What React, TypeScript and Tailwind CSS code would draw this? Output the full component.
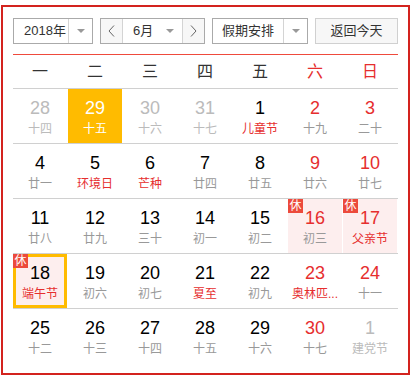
import React from "react";

type Cell = {
  d: string;
  l: string;
  out?: boolean;
  sel?: boolean;
  today?: boolean;
  rest?: boolean;
  red?: boolean;
  fest?: boolean;
};

const rows: Cell[][] = [
  [
    { d: "28", l: "十四", out: true },
    { d: "29", l: "十五", sel: true },
    { d: "30", l: "十六", out: true },
    { d: "31", l: "十七", out: true },
    { d: "1", l: "儿童节", fest: true },
    { d: "2", l: "十九", red: true },
    { d: "3", l: "二十", red: true },
  ],
  [
    { d: "4", l: "廿一" },
    { d: "5", l: "环境日", fest: true },
    { d: "6", l: "芒种", fest: true },
    { d: "7", l: "廿四" },
    { d: "8", l: "廿五" },
    { d: "9", l: "廿六", red: true },
    { d: "10", l: "廿七", red: true },
  ],
  [
    { d: "11", l: "廿八" },
    { d: "12", l: "廿九" },
    { d: "13", l: "三十" },
    { d: "14", l: "初一" },
    { d: "15", l: "初二" },
    { d: "16", l: "初三", red: true, rest: true },
    { d: "17", l: "父亲节", red: true, rest: true, fest: true },
  ],
  [
    { d: "18", l: "端午节", rest: true, today: true, fest: true },
    { d: "19", l: "初六" },
    { d: "20", l: "初七" },
    { d: "21", l: "夏至", fest: true },
    { d: "22", l: "初九" },
    { d: "23", l: "奥林匹...", red: true, fest: true },
    { d: "24", l: "十一", red: true },
  ],
  [
    { d: "25", l: "十二" },
    { d: "26", l: "十三" },
    { d: "27", l: "十四" },
    { d: "28", l: "十五" },
    { d: "29", l: "十六" },
    { d: "30", l: "十七", red: true },
    { d: "1", l: "建党节", out: true },
  ],
];

const FONT = { fontFamily: '"Liberation Sans", Arial, "Noto Sans CJK SC", sans-serif' };

function Tri() {
  return (
    <svg width="8" height="4" viewBox="0 0 8 4">
      <path d="M0 0H8L4 4Z" fill="#999" />
    </svg>
  );
}

function Chevron({ dir }: { dir: "l" | "r" }) {
  return (
    <svg width="7" height="12" viewBox="0 0 7 12">
      <polyline
        points={dir === "l" ? "6,0.5 1,6 6,11.5" : "1,0.5 6,6 1,11.5"}
        fill="none"
        stroke="#666"
        strokeWidth="1"
      />
    </svg>
  );
}

function DayCell({ c }: { c: Cell }) {
  let numColor = "text-black";
  let lunColor = "text-[#999]";
  if (c.red) numColor = "text-[#e62e2e]";
  if (c.fest) lunColor = "text-[#e62e2e]";
  if (c.out) {
    numColor = "text-[#bbb]";
    lunColor = "text-[#bbb]";
  }
  if (c.sel) {
    numColor = "text-white";
    lunColor = "text-white";
  }
  const bg = c.sel ? "bg-[#ffbb00]" : c.rest ? "bg-[#fdeeee]" : "";
  return (
    <div className="w-[55px] h-[54px] pr-px">
      <div className={`relative w-[54px] h-[54px] pt-[8px] flex flex-col items-center ${bg}`}>
        {c.today && <div className="absolute inset-0 border-[3px] border-[#ffbb00]" />}
        {c.rest && (
          <div className="absolute left-0 top-0 w-[15px] h-[14px] bg-[#ec4a3c] text-white text-[12px] leading-[14px] text-center">
            休
          </div>
        )}
        <div className={`relative h-[22px] leading-[22px] text-[18px] ${numColor}`}>{c.d}</div>
        <div className={`relative h-[20px] leading-[20px] text-[12px] whitespace-nowrap ${lunColor}`}>{c.l}</div>
      </div>
    </div>
  );
}

export default function App() {
  const week = ["一", "二", "三", "四", "五", "六", "日"];
  return (
    <div style={FONT} className="bg-white w-[411px] h-[376px] pt-[5px] pl-px">
      <div className="w-[409px] h-[370px] border-2 border-[#d3231e] px-[10px] pt-[11px] pb-[10px]">
        <div className="flex h-[26px] text-[13px] text-[#333]">
          <div className="flex w-[80px] border border-[#aaa]">
            <div className="flex-1 flex items-center pl-[10px]">2018年</div>
            <div className="w-[24px] border-l border-[#d4d4d4] flex items-center justify-center">
              <Tri />
            </div>
          </div>
          <div className="ml-[7px] flex w-[105px] border border-[#aaa]">
            <div className="w-[22px] border-r border-[#d4d4d4] bg-[#f7f7f7] flex items-center justify-center">
              <Chevron dir="l" />
            </div>
            <div className="flex-1 flex items-center pl-[10px] pr-[8px] justify-between">
              <span>6月</span>
              <Tri />
            </div>
            <div className="w-[22px] border-l border-[#d4d4d4] bg-[#f7f7f7] flex items-center justify-center">
              <Chevron dir="r" />
            </div>
          </div>
          <div className="ml-[7px] flex w-[96px] border border-[#aaa]">
            <div className="flex-1 flex items-center justify-center">假期安排</div>
            <div className="w-[24px] border-l border-[#d4d4d4] flex items-center justify-center">
              <Tri />
            </div>
          </div>
          <div className="ml-auto w-[83px] border border-[#d0d0d0] bg-[#f7f7f7] flex items-center justify-center">
            返回今天
          </div>
        </div>
        <div className="mt-[10px] h-px bg-[#ef4a3c]" />
        <div className="grid grid-cols-7 h-[34px] border-b border-[#d0d0d0]">
          {week.map((w, i) => (
            <div
              key={w}
              className={`w-[54px] flex items-center justify-center text-[16px] ${i >= 5 ? "text-[#e62e2e]" : "text-[#333]"}`}
            >
              {w}
            </div>
          ))}
        </div>
        {rows.map((r, ri) => (
          <div key={ri} className={`flex ${ri < rows.length - 1 ? "border-b border-[#d0d0d0]" : ""}`}>
            {r.map((c, ci) => (
              <DayCell key={ci} c={c} />
            ))}
          </div>
        ))}
      </div>
    </div>
  );
}
